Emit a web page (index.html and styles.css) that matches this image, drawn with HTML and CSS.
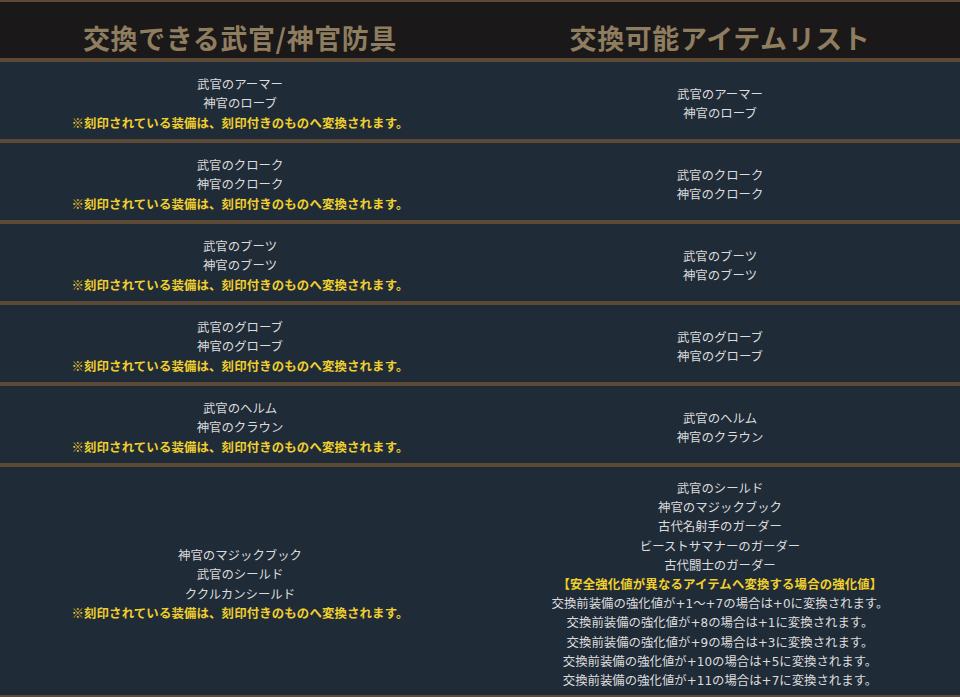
FILE: index.html
```html
<!DOCTYPE html>
<html lang="ja">
<head>
<meta charset="utf-8">
<title>交換可能アイテムリスト</title>
<link rel="stylesheet" href="styles.css">
</head>
<body>
<div class="table">
  <div class="head">
    <div class="hcell">交換できる武官/神官防具</div>
    <div class="hcell">交換可能アイテムリスト</div>
  </div>
  <div class="row">
    <div class="cell"><p>武官のアーマー</p><p>神官のローブ</p><p class="note">※刻印されている装備は、刻印付きのものへ変換されます。</p></div>
    <div class="cell"><p>武官のアーマー</p><p>神官のローブ</p></div>
  </div>
  <div class="row">
    <div class="cell"><p>武官のクローク</p><p>神官のクローク</p><p class="note">※刻印されている装備は、刻印付きのものへ変換されます。</p></div>
    <div class="cell"><p>武官のクローク</p><p>神官のクローク</p></div>
  </div>
  <div class="row">
    <div class="cell"><p>武官のブーツ</p><p>神官のブーツ</p><p class="note">※刻印されている装備は、刻印付きのものへ変換されます。</p></div>
    <div class="cell"><p>武官のブーツ</p><p>神官のブーツ</p></div>
  </div>
  <div class="row">
    <div class="cell"><p>武官のグローブ</p><p>神官のグローブ</p><p class="note">※刻印されている装備は、刻印付きのものへ変換されます。</p></div>
    <div class="cell"><p>武官のグローブ</p><p>神官のグローブ</p></div>
  </div>
  <div class="row">
    <div class="cell"><p>武官のヘルム</p><p>神官のクラウン</p><p class="note">※刻印されている装備は、刻印付きのものへ変換されます。</p></div>
    <div class="cell"><p>武官のヘルム</p><p>神官のクラウン</p></div>
  </div>
  <div class="row">
    <div class="cell"><p>神官のマジックブック</p><p>武官のシールド</p><p>ククルカンシールド</p><p class="note">※刻印されている装備は、刻印付きのものへ変換されます。</p></div>
    <div class="cell"><p>武官のシールド</p><p>神官のマジックブック</p><p>古代名射手のガーダー</p><p>ビーストサマナーのガーダー</p><p>古代闘士のガーダー</p><p class="note">【安全強化値が異なるアイテムへ変換する場合の強化値】</p><p>交換前装備の強化値が<span class="num">+1</span>～<span class="num">+7</span>の場合は<span class="num">+0</span>に変換されます。</p><p>交換前装備の強化値が<span class="num">+8</span>の場合は<span class="num">+1</span>に変換されます。</p><p>交換前装備の強化値が<span class="num">+9</span>の場合は<span class="num">+3</span>に変換されます。</p><p>交換前装備の強化値が<span class="num">+10</span>の場合は<span class="num">+5</span>に変換されます。</p><p>交換前装備の強化値が<span class="num">+11</span>の場合は<span class="num">+7</span>に変換されます。</p></div>
  </div>
</div>
</body>
</html>
```

FILE: styles.css
```css
html, body {
  margin: 0;
  padding: 0;
  background: #202b38;
}
body {
  font-family: "Noto Sans CJK JP", "Noto Sans", sans-serif;
  color: #dcdcdc;
}
.table {
  border-top: 2px solid #5c4a36;
}
.head {
  display: grid;
  grid-template-columns: 1fr 1fr;
  background: #1a1818;
  box-sizing: border-box;
  padding-top: 21px;
  border-bottom: 4px solid #5c4a36;
  height: 60px;
}
.hcell {
  text-align: center;
  font-size: 27px;
  line-height: 30px;
  font-weight: 700;
  letter-spacing: 0.6px;
  color: #8e7d5f;
}
.row {
  display: grid;
  grid-template-columns: 1fr 1fr;
  border-bottom: 4px solid #5c4a36;
}
.cell {
  display: flex;
  flex-direction: column;
  justify-content: center;
  align-items: center;
  min-height: 77px;
  box-sizing: border-box;
  padding: 12px 0 5px;
  font-size: 12.4px;
  line-height: 19.2px;
  text-align: center;
}
.cell p {
  margin: 0;
  height: 19.2px;
  white-space: nowrap;
}
.cell p.note {
  color: #f0d02c;
  font-weight: 700;
  letter-spacing: 0.15px;
}
.num {
  font-family: "DejaVu Sans", sans-serif;
  font-size: 12px;
  line-height: 1;
}
```
